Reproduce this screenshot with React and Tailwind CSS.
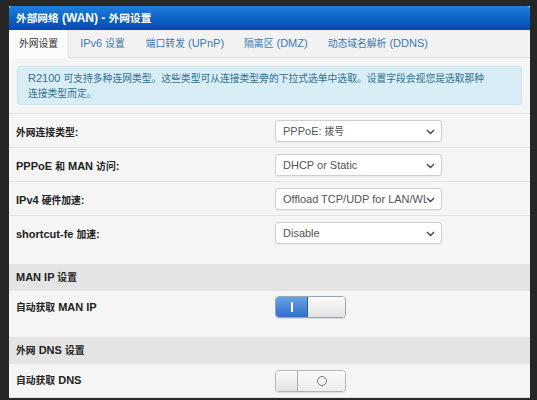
import React from "react";

const font = { fontFamily: '"Liberation Sans", "Noto Sans CJK SC", Arial, sans-serif' };

function T({ children }) {
  const parts = String(children).split(/([\u3000-\u303f\u4e00-\u9fff\uff00-\uffef]+)/);
  return (
    <>
      {parts.map((p, i) =>
        /[\u3000-\u303f\u4e00-\u9fff\uff00-\uffef]/.test(p) ? (
          <span key={i} className="text-[0.89em]">{p}</span>
        ) : (
          <React.Fragment key={i}>{p}</React.Fragment>
        )
      )}
    </>
  );
}

function Chevron() {
  return (
    <svg width="9" height="6" viewBox="0 0 9 6" className="absolute right-[6px] top-[8px]">
      <path d="M1 1 L4.5 4.5 L8 1" fill="none" stroke="#444" strokeWidth="1.4" />
    </svg>
  );
}

function Select({ value }) {
  return (
    <div className="relative h-[22px] w-[167px] rounded-[3px] border border-[#cfcfcf] bg-white pl-[7px] text-[11px] leading-[20px] text-[#555] shadow-[0_1px_1px_rgba(0,0,0,0.04)]">
      <div className="w-[144px] overflow-hidden whitespace-nowrap">
        <T>{value}</T>
      </div>
      <Chevron />
    </div>
  );
}

function Row({ label, children, extra = "h-[34px]" }) {
  return (
    <div className={`flex items-start border-t border-[#e2e2e2] ${extra}`}>
      <div className="w-[266px] pl-[7px] pt-[10px] text-[11px] font-bold text-[#222]">
        <T>{label}</T>
      </div>
      <div className="pt-[6px]">{children}</div>
    </div>
  );
}

function ToggleOn() {
  return (
    <div className="flex h-[22px] w-[71px] overflow-hidden rounded-[4px] border border-[#9aa3b0] shadow-[0_1px_1px_rgba(0,0,0,0.1)]">
      <div className="flex w-[32px] items-center justify-center border-r border-[#2a5ea8] bg-gradient-to-b from-[#6aa2e8] to-[#2f6fcb]">
        <div className="h-[10px] w-[2px] bg-white" />
      </div>
      <div className="flex-1 bg-gradient-to-b from-[#fbfbfb] to-[#e2e2e2]" />
    </div>
  );
}

function ToggleOff() {
  return (
    <div className="flex h-[22px] w-[71px] overflow-hidden rounded-[4px] border border-[#b5b5b5] shadow-[0_1px_1px_rgba(0,0,0,0.1)]">
      <div className="w-[22px] border-r border-[#aaa] bg-gradient-to-b from-[#fbfbfb] to-[#e2e2e2]" />
      <div className="flex flex-1 items-center justify-center bg-gradient-to-b from-[#fafafa] to-[#ececec]">
        <div className="h-[10px] w-[10px] rounded-full border-[1.5px] border-[#777]" />
      </div>
    </div>
  );
}

export default function App() {
  return (
    <div className="h-[400px] w-[537px] overflow-hidden bg-[#262626] pt-[6px]" style={font}>
      <div className="ml-[9px] w-[521px] bg-[#f5f5f5]">
        <div className="h-[24px] rounded-t-[3px] bg-gradient-to-b from-[#1d7fdb] to-[#0748b0] pl-[7px] text-[12px] font-bold leading-[24px] text-white">
          <T>外部网络 (WAN) - 外网设置</T>
        </div>
        <div className="flex h-[28px] border-b border-[#dcdcdc] bg-[#f2f2f2] text-[11px] leading-[27px]">
          <div className="h-[28px] border-r border-[#e0e0e0] bg-[#fbfbfb] px-[10px] text-[#333]">
            <T>外网设置</T>
          </div>
          <div className="px-[11px] text-[#3a78b8]">
            <T>IPv6 设置</T>
          </div>
          <div className="px-[10px] text-[#3a78b8]">
            <T>端口转发 (UPnP)</T>
          </div>
          <div className="px-[10px] text-[#3a78b8]">
            <T>隔离区 (DMZ)</T>
          </div>
          <div className="px-[10px] text-[#3a78b8]">
            <T>动态域名解析 (DDNS)</T>
          </div>
        </div>
        <div className="p-[8px]">
          <div className="h-[39px] rounded-[3px] border border-[#c9e6f0] bg-[#d9edf7] px-[10px] pt-[4px] text-[11px] leading-[14px] text-[#31708f]">
            <T>R2100 可支持多种连网类型。这些类型可从连接类型旁的下拉式选单中选取。设置字段会视您是选取那种</T>
            <br />
            <T>连接类型而定。</T>
          </div>
        </div>
        <div>
          <Row label="外网连接类型:">
            <Select value="PPPoE: 拨号" />
          </Row>
          <Row label="PPPoE 和 MAN 访问:">
            <Select value="DHCP or Static" />
          </Row>
          <Row label="IPv4 硬件加速:">
            <Select value="Offload TCP/UDP for LAN/WLAN" />
          </Row>
          <Row label="shortcut-fe 加速:" extra="h-[49px]">
            <Select value="Disable" />
          </Row>
          <div className="h-[27px] bg-[#e4e4e4] pl-[7px] text-[11px] font-bold leading-[27px] text-[#222]">
            <T>MAN IP 设置</T>
          </div>
          <div className="flex h-[46px] items-start">
            <div className="w-[266px] pl-[7px] pt-[8px] text-[11px] font-bold text-[#222]">
              <T>自动获取 MAN IP</T>
            </div>
            <div className="pt-[5px]">
              <ToggleOn />
            </div>
          </div>
          <div className="h-[27px] bg-[#e4e4e4] pl-[7px] text-[11px] font-bold leading-[27px] text-[#222]">
            <T>外网 DNS 设置</T>
          </div>
          <div className="flex h-[34px] items-start border-b border-[#e2e2e2]">
            <div className="w-[266px] pl-[7px] pt-[8px] text-[11px] font-bold text-[#222]">
              <T>自动获取 DNS</T>
            </div>
            <div className="pt-[6px]">
              <ToggleOff />
            </div>
          </div>
        </div>
      </div>
    </div>
  );
}
